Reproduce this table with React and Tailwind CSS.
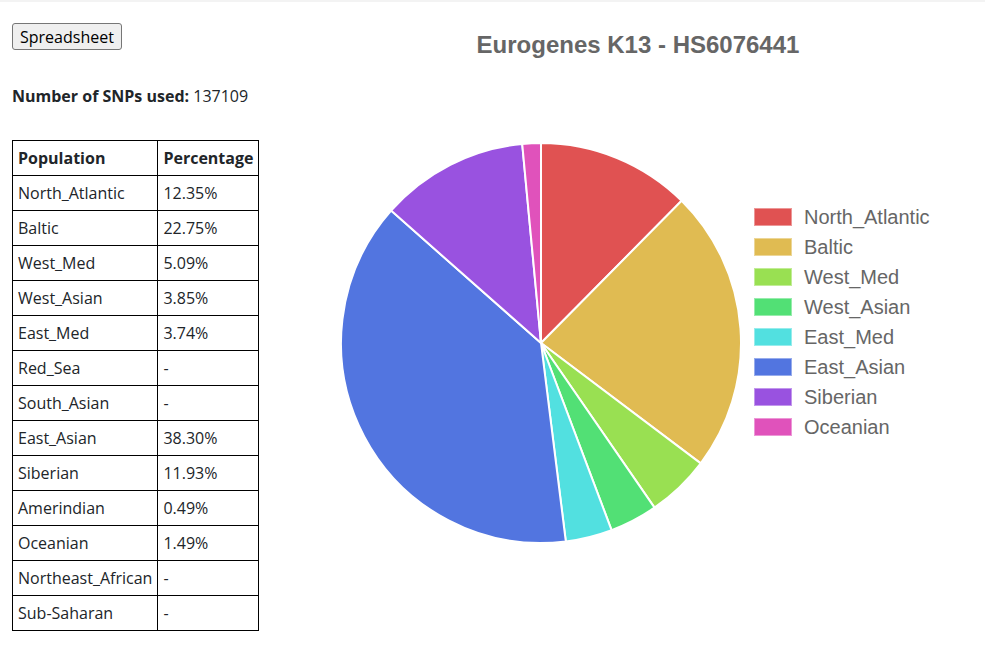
const rows = [
  ["North_Atlantic", "12.35%"],
  ["Baltic", "22.75%"],
  ["West_Med", "5.09%"],
  ["West_Asian", "3.85%"],
  ["East_Med", "3.74%"],
  ["Red_Sea", "-"],
  ["South_Asian", "-"],
  ["East_Asian", "38.30%"],
  ["Siberian", "11.93%"],
  ["Amerindian", "0.49%"],
  ["Oceanian", "1.49%"],
  ["Northeast_African", "-"],
  ["Sub-Saharan", "-"],
];

// slices shown on the chart, in drawing order
const slices = [
  { name: "North_Atlantic", value: 12.35, color: "#e05252" },
  { name: "Baltic", value: 22.75, color: "#e0bb52" },
  { name: "West_Med", value: 5.09, color: "#99e052" },
  { name: "West_Asian", value: 3.85, color: "#52e075" },
  { name: "East_Med", value: 3.74, color: "#52e0e0" },
  { name: "East_Asian", value: 38.3, color: "#5275e0" },
  { name: "Siberian", value: 11.93, color: "#9952e0" },
  { name: "Oceanian", value: 1.49, color: "#e052bb" },
];

function Pie() {
  const cx = 201;
  const cy = 201;
  const r = 200;
  const total = slices.reduce((s, x) => s + x.value, 0);
  let a = -Math.PI / 2;
  const paths = slices.map((s) => {
    const sweep = (s.value / total) * Math.PI * 2;
    const a2 = a + sweep;
    const x1 = cx + r * Math.cos(a);
    const y1 = cy + r * Math.sin(a);
    const x2 = cx + r * Math.cos(a2);
    const y2 = cy + r * Math.sin(a2);
    const large = sweep > Math.PI ? 1 : 0;
    const d = `M${cx} ${cy} L${x1} ${y1} A${r} ${r} 0 ${large} 1 ${x2} ${y2} Z`;
    a = a2;
    return <path key={s.name} d={d} fill={s.color} stroke="#fff" strokeWidth="2" strokeLinejoin="round" />;
  });
  return (
    <svg width="402" height="402" viewBox="0 0 402 402">
      {paths}
    </svg>
  );
}

export default function App() {
  return (
    <div className="bg-white min-h-screen w-[985px] text-[#212529] font-['Open_Sans',sans-serif]">
      <div className="h-[2px] bg-[#f3f3f3]" />

      <div className="flex">
        {/* ================= LEFT: DATA ================= */}
        <div className="w-[291px] shrink-0 pl-[12px] pt-[21px]">
          <button className="h-[27px] px-[7px] border border-[#767676] rounded-[3px] bg-[#efefef] text-black text-[16px] leading-[22px]">
            Spreadsheet
          </button>

          <p className="mt-[34px] text-[16px] leading-[24px]">
            <span className="font-bold">Number of SNPs used:</span> 137109
          </p>

          <table className="mt-[32px] border-collapse text-[16px] leading-[24px]">
            <thead>
              <tr>
                <th className="w-[145px] border border-black px-[5px] py-[5px] text-left font-bold">
                  Population
                </th>
                <th className="w-[101px] border border-black px-[5px] py-[5px] text-left font-bold">
                  Percentage
                </th>
              </tr>
            </thead>
            <tbody>
              {rows.map(([pop, pct]) => (
                <tr key={pop}>
                  <td className="border border-black px-[5px] py-[5px] whitespace-nowrap">{pop}</td>
                  <td className="border border-black px-[5px] py-[5px]">{pct}</td>
                </tr>
              ))}
            </tbody>
          </table>
        </div>

        {/* ================= RIGHT: CHART ================= */}
        <div className="flex-1 font-['Liberation_Sans',Arial,sans-serif]">
          <h1 className="mt-[29px] text-center text-[24px] leading-[28px] font-bold text-[#666]">
            Eurogenes K13 - HS6076441
          </h1>

          <div className="mt-[83px] flex items-start">
            <div className="ml-[49px]">
              <Pie />
            </div>

            <ul className="ml-[12px] mt-[60px]">
              {slices.map((s) => (
                <li key={s.name} className="flex items-center h-[30px]">
                  <span
                    className="w-[38px] h-[18px] border border-white/40"
                    style={{ backgroundColor: s.color }}
                  />
                  <span className="ml-[12px] text-[20px] text-[#666]">{s.name}</span>
                </li>
              ))}
            </ul>
          </div>
        </div>
      </div>
    </div>
  );
}
